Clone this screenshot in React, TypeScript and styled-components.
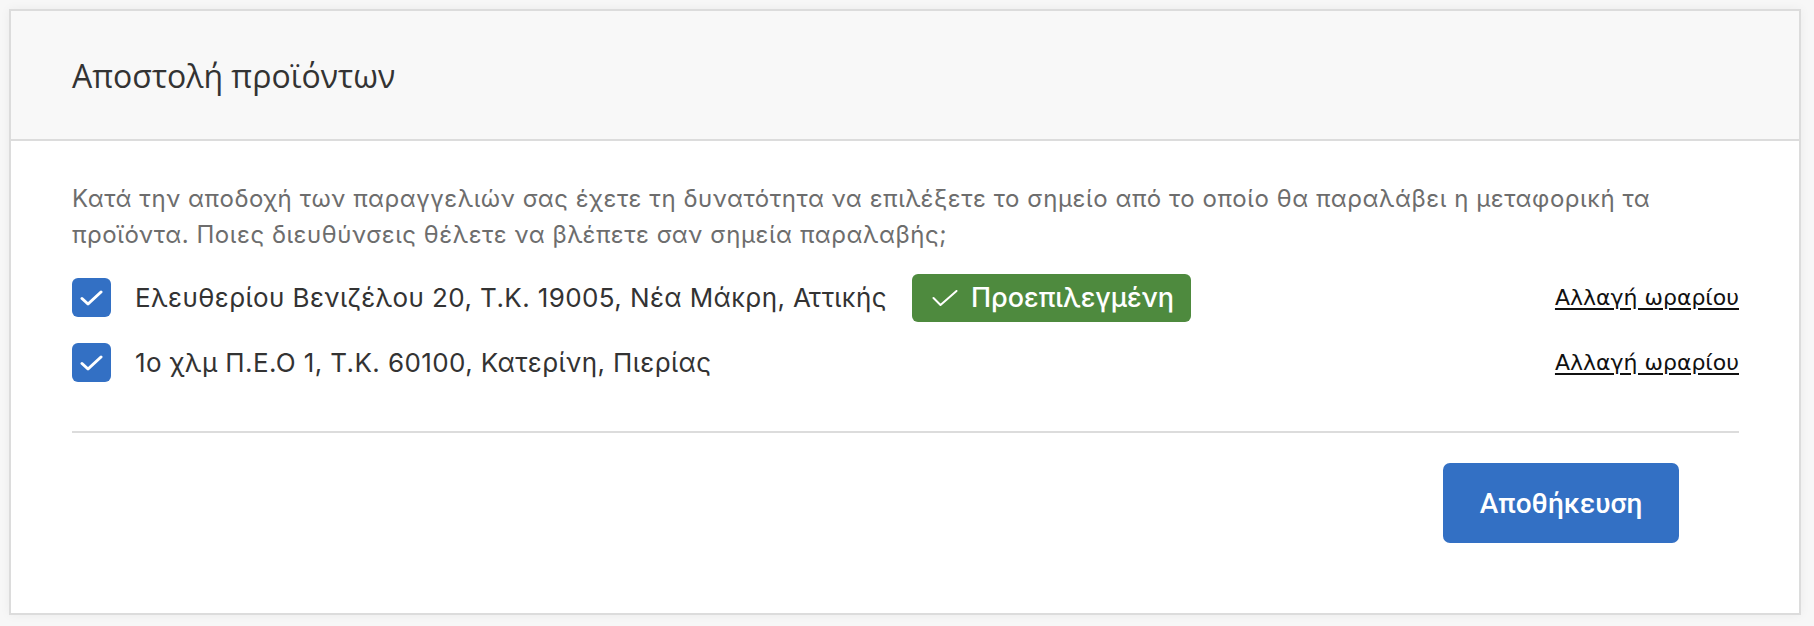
import styled, { createGlobalStyle } from "styled-components"

const GlobalStyle = createGlobalStyle`
    html, body {
        margin: 0;
        padding: 0;
        background: #f7f7f7;
    }
    body {
        font-family: Inter, Roboto, "Noto Sans", sans-serif;
    }
`

type Address = {
    id: number
    label: string
    isDefault?: boolean
}

const addresses: Address[] = [
    { id: 1, label: "Ελευθερίου Βενιζέλου 20, Τ.Κ. 19005, Νέα Μάκρη, Αττικής", isDefault: true },
    { id: 2, label: "1ο χλμ Π.Ε.Ο 1, Τ.Κ. 60100, Κατερίνη, Πιερίας" },
]

const BoxCheck = () => (
    <svg width="23" height="16" viewBox="0 0 23 16" fill="none">
        <path d="M2 8.5L8 14L21 2" stroke="#fff" strokeWidth="3" strokeLinecap="round" strokeLinejoin="round" />
    </svg>
)

const BadgeCheck = () => (
    <svg width="26" height="16" viewBox="0 0 26 16" fill="none">
        <path d="M1.5 8L8.5 15L24.5 1" stroke="#fff" strokeWidth="2" strokeLinecap="round" strokeLinejoin="round" />
    </svg>
)

const App: React.FC = () => {
    return (
        <>
            <GlobalStyle />
            <Card>
                <Header>
                    <Title>Αποστολή προϊόντων</Title>
                </Header>
                <Body>
                    <Intro>
                        Κατά την αποδοχή των παραγγελιών σας έχετε τη δυνατότητα να επιλέξετε το σημείο από το οποίο θα παραλάβει η μεταφορική τα
                        προϊόντα. Ποιες διευθύνσεις θέλετε να βλέπετε σαν σημεία παραλαβής;
                    </Intro>
                    <AddressList>
                        {addresses.map((a) => (
                            <AddressRow key={a.id}>
                                <Checkbox>
                                    <BoxCheck />
                                </Checkbox>
                                <AddressText>{a.label}</AddressText>
                                {a.isDefault && (
                                    <DefaultBadge>
                                        <BadgeCheck />
                                        Προεπιλεγμένη
                                    </DefaultBadge>
                                )}
                                <ScheduleLink href="#">Αλλαγή ωραρίου</ScheduleLink>
                            </AddressRow>
                        ))}
                    </AddressList>
                    <Divider />
                    <Actions>
                        <SaveButton>Αποθήκευση</SaveButton>
                    </Actions>
                </Body>
            </Card>
        </>
    )
}
export default App

const Card = styled.div`
    margin: 9px;
    width: 1792px;
    height: 606px;
    box-sizing: border-box;
    border: 2px solid #dcdcdc;
    background: #fff;
    box-shadow: 0 0 10px rgba(0, 0, 0, 0.05);
    display: flex;
    flex-direction: column;
`
const Header = styled.div`
    height: 128px;
    flex: none;
    background: #f8f8f8;
    border-bottom: 2px solid #dcdcdc;
    display: flex;
    align-items: center;
    padding: 0 61px;
`
const Title = styled.h2`
    margin: 0;
    font-family: "Open Sans", "Noto Sans", sans-serif;
    font-weight: 400;
    font-size: 32px;
    color: #333;
`
const Body = styled.div`
    padding: 40px 60px 0 61px;
    display: flex;
    flex-direction: column;
`
const Intro = styled.p`
    margin: 0;
    font-size: 24px;
    line-height: 36px;
    letter-spacing: 0.55px;
    color: #6d6d6d;
`
const AddressList = styled.div`
    margin-top: 25px;
    display: flex;
    flex-direction: column;
    gap: 26px;
`
const AddressRow = styled.div`
    display: flex;
    align-items: center;
    height: 39px;
`
const Checkbox = styled.span`
    width: 39px;
    height: 39px;
    flex: none;
    border-radius: 6px;
    background: #3370c4;
    display: flex;
    align-items: center;
    justify-content: center;
`
const AddressText = styled.span`
    margin-left: 24px;
    font-size: 26px;
    letter-spacing: 0.4px;
    color: #333;
`
const DefaultBadge = styled.span`
    margin-left: 25px;
    height: 48px;
    padding: 0 17px 0 20px;
    box-sizing: border-box;
    border-radius: 6px;
    background: #4e8a3e;
    color: #fff;
    font-size: 27px;
    font-weight: 500;
    display: flex;
    align-items: center;
    gap: 13px;
`
const ScheduleLink = styled.a`
    margin-left: auto;
    font-family: "DejaVu Sans", sans-serif;
    font-size: 22px;
    color: #111;
    text-decoration: underline;
    text-underline-offset: 3px;
`
const Divider = styled.hr`
    margin: 49px 0 0 0;
    border: none;
    height: 2px;
    background: #dcdcdc;
`
const Actions = styled.div`
    display: flex;
    justify-content: flex-end;
    padding-right: 60px;
    margin-top: 30px;
`
const SaveButton = styled.button`
    width: 236px;
    height: 80px;
    border: none;
    border-radius: 7px;
    background: #3370c4;
    color: #fff;
    font-family: Roboto, "Noto Sans", sans-serif;
    font-size: 28px;
    font-weight: 500;
    cursor: pointer;
`
